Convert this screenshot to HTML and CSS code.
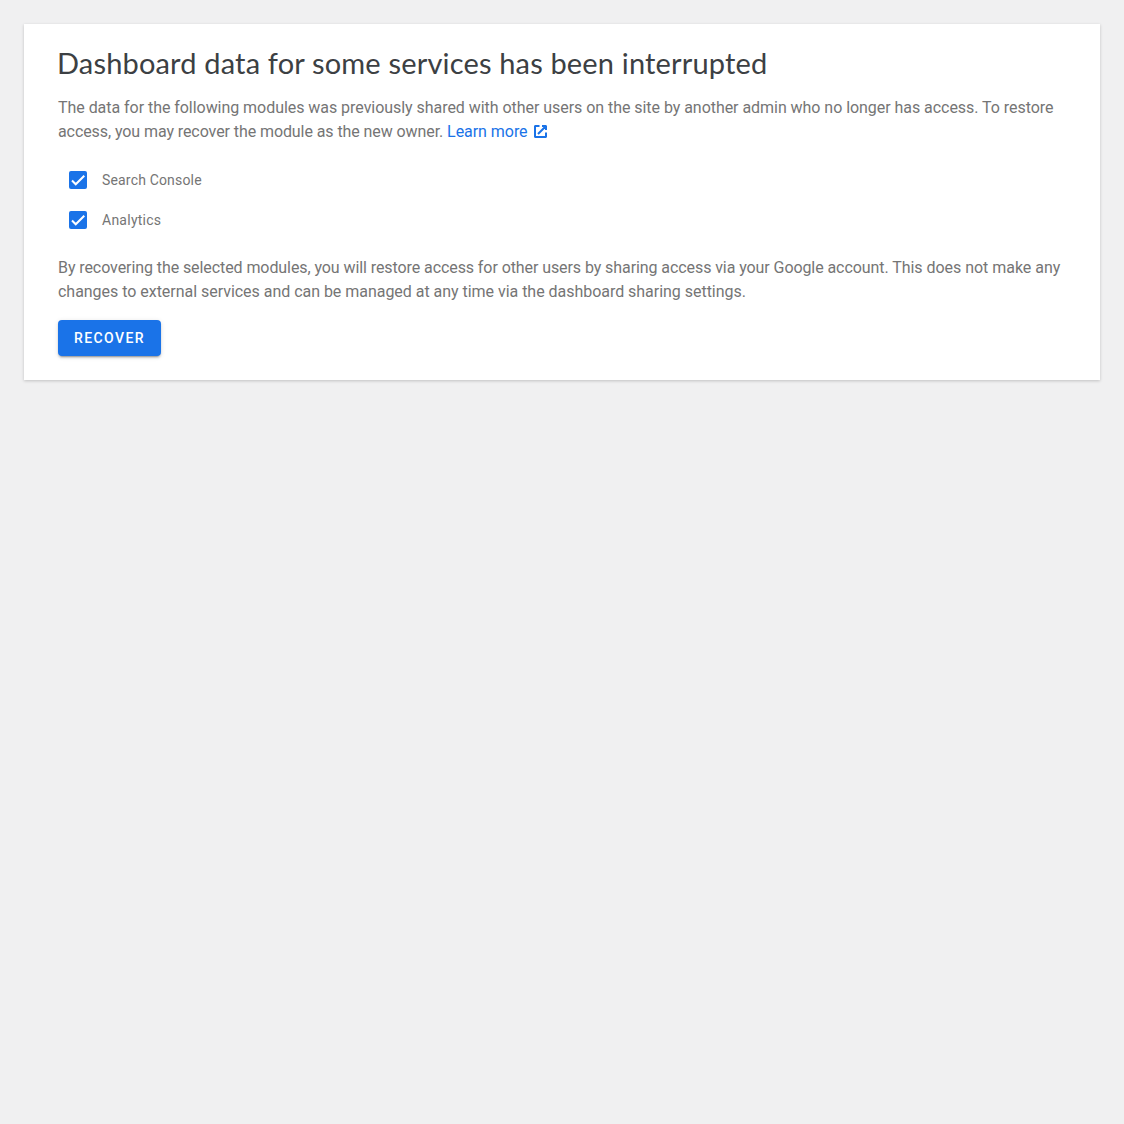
FILE: index.html
```html
<!DOCTYPE html>
<html lang="en">
<head>
<meta charset="utf-8">
<title>Dashboard</title>
<link rel="stylesheet" href="styles.css">
</head>
<body>
<section class="card">
  <h3 class="title">Dashboard data for some services has been interrupted</h3>
  <p class="text">The data for the following modules was previously shared with other users on the site by another admin who no longer has access. To restore <span class="tail">access, you may recover the module as the new owner. </span><a class="link" href="#">Learn more<svg class="link-icon" viewBox="0 0 13 13" width="13" height="13"><path d="M5.500 1H1v11h11V7.500M8 1h4v4M12 1 4 9"/></svg></a></p>
  <div class="modules">
    <label class="option"><span class="box"><svg viewBox="0 0 24 24"><path d="M1.730 12.910 8.100 19.280 22.790 4.590"/></svg></span><span class="name">Search Console</span></label>
    <label class="option"><span class="box"><svg viewBox="0 0 24 24"><path d="M1.730 12.910 8.100 19.280 22.790 4.590"/></svg></span><span>Analytics</span></label>
  </div>
  <p class="text note"><span class="lead">By recovering the selected modules, you will restore access for other users by sharing access via your Google account.</span> This does not make any changes to external services and can be managed at any time via the dashboard sharing settings.</p>
  <button class="button">Recover</button>
</section>
</body>
</html>
```
FILE: styles.css
```css
* { box-sizing: border-box; }
body { margin: 0; padding: 24px; background: #f0f0f1; font-family: Roboto, sans-serif; color: #757575; }
.card { height: 356px; padding: 20px 34px 24px; background: #fff; box-shadow: 0 1px 3px rgba(0,0,0,.2); }
.title { margin: 0 0 0 -1px; font: 400 29px/38px "Google Sans", Lato, sans-serif; letter-spacing: .17px; color: #3c4043; white-space: nowrap; }
.text { margin: 14px 0 0; font-size: 16px; line-height: 24px; letter-spacing: -.045px; }
.tail { letter-spacing: -.083px; }
.link { color: #1a73e8; text-decoration: none; }
.link-icon { margin-left: 6px; vertical-align: -1px; border-radius: 1px; fill: none; stroke: currentColor; stroke-width: 2; stroke-linejoin: round; }
.modules { margin: 16px 0; }
.option { display: flex; align-items: center; gap: 15px; height: 40px; padding-left: 11px; font-size: 14px; letter-spacing: .25px; }
.name { letter-spacing: .17px; }
.box { display: flex; width: 18px; height: 18px; padding: 2px; border-radius: 2px; background: #1a73e8; }
.box svg { width: 14px; height: 14px; }
.box path { fill: none; stroke: #fff; stroke-width: 3.500; }
.note { margin-top: 0; letter-spacing: -.03px; }
.lead { letter-spacing: -.081px; }
.button { display: block; margin-top: 16px; width: 103px; height: 36px; padding: 0; border: 0; border-radius: 4px; background: #1a73e8; color: #fff; font: 500 14px/36px Roboto, sans-serif; letter-spacing: 1.440px; text-transform: uppercase; box-shadow: 0 3px 1px -2px rgba(0,0,0,.2), 0 2px 2px rgba(0,0,0,.14), 0 1px 5px rgba(0,0,0,.12); }
```
